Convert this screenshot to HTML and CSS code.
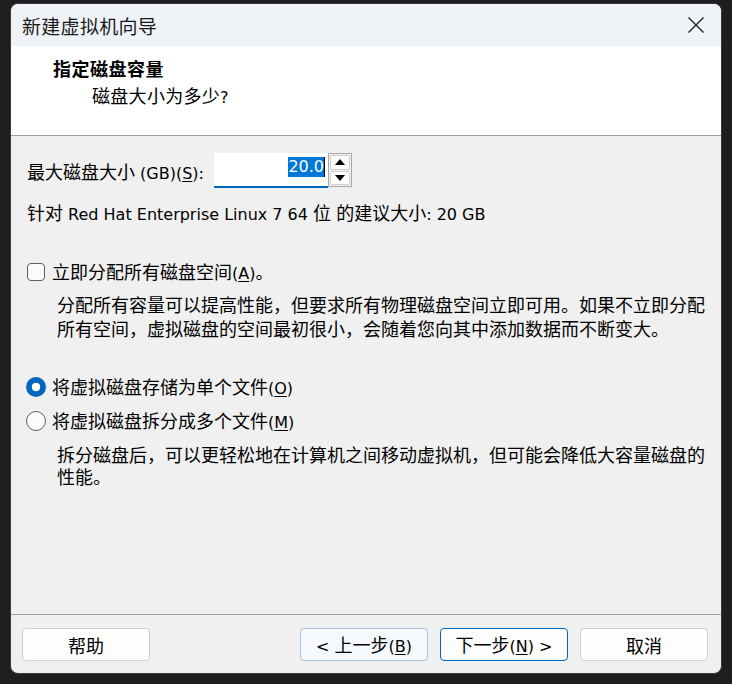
FILE: index.html
```html
<!DOCTYPE html>
<html lang="zh-CN">
<head>
<meta charset="utf-8">
<title>新建虚拟机向导</title>
<link rel="stylesheet" href="styles.css">
</head>
<body>
<div class="window">
  <div class="titlebar">
    <span class="title">新建虚拟机向导</span>
    <svg class="close" width="16" height="16" viewBox="0 0 16 16"><path d="M0.5 0.5 L15.5 15.5 M15.5 0.5 L0.5 15.5" stroke="#1a1a1a" stroke-width="1.3" fill="none"/></svg>
  </div>
  <div class="header">
    <div class="h-title">指定磁盘容量</div>
    <div class="h-sub">磁盘大小为多少<span class="lat">?</span></div>
  </div>
  <div class="content">
    <div class="size-row">
      <span class="size-label">最大磁盘大小<span class="lat"> (GB)(<u>S</u>):</span></span>
      <div class="spin">
        <div class="spin-field"><span class="sel">20.0</span><span class="caret"></span></div>
        <div class="spin-btns">
          <div class="spin-btn"><svg width="10" height="6" viewBox="0 0 10 6"><path d="M5 0 L10 6 L0 6 Z" fill="#000"/></svg></div>
          <div class="spin-btn"><svg width="10" height="6" viewBox="0 0 10 6"><path d="M0 0 L10 0 L5 6 Z" fill="#000"/></svg></div>
        </div>
      </div>
    </div>
    <div class="hint">针对<span class="lat"> Red Hat Enterprise Linux 7 64 </span>位<span class="lat"> </span>的建议大小<span class="lat">: 20 GB</span></div>
    <div class="option check-row"><span class="checkbox"></span><span>立即分配所有磁盘空间<span class="lat">(<u>A</u>)</span>。</span></div>
    <p class="desc desc1">分配所有容量可以提高性能，但要求所有物理磁盘空间立即可用。如果不立即分配<br>所有空间，虚拟磁盘的空间最初很小，会随着您向其中添加数据而不断变大。</p>
    <div class="option radio-row1"><span class="radio on"></span><span>将虚拟磁盘存储为单个文件<span class="lat">(<u>O</u>)</span></span></div>
    <div class="option radio-row2"><span class="radio"></span><span>将虚拟磁盘拆分成多个文件<span class="lat">(<u>M</u>)</span></span></div>
    <p class="desc desc2">拆分磁盘后，可以更轻松地在计算机之间移动虚拟机，但可能会降低大容量磁盘的<br>性能。</p>
  </div>
  <div class="footer">
    <button class="btn">帮助</button>
    <span class="spacer"></span>
    <button class="btn back"><span class="lat">&lt; </span>上一步<span class="lat">(<u>B</u>)</span></button>
    <button class="btn next">下一步<span class="lat">(<u>N</u>) &gt;</span></button>
    <button class="btn">取消</button>
  </div>
</div>
</body>
</html>
```

FILE: styles.css
```css
html, body {
  margin: 0;
  padding: 0;
  background: #1e1e1e;
}

body {
  font-family: "Noto Sans CJK SC", "Noto Sans", sans-serif;
  font-size: 18px;
  color: #000;
}

.lat {
  font-family: "DejaVu Sans", sans-serif;
  font-size: 16px;
  letter-spacing: 0;
}

u {
  text-decoration-thickness: 1px;
  text-underline-offset: 2px;
}

.window {
  margin: 3px 0 0 10px;
  width: 712px;
  height: 671px;
  box-sizing: border-box;
  border: 1px solid #3a3a3a;
  border-radius: 8px;
  overflow: hidden;
  display: flex;
  flex-direction: column;
  background: #f0f0f0;
}

.titlebar {
  height: 42px;
  flex: none;
  background: #eff2f7;
  display: flex;
  align-items: center;
  justify-content: space-between;
  padding: 0 17px 0 11px;
}

.title {
  font-size: 19px;
  line-height: 1;
  color: #1a1a1a;
  letter-spacing: 0.3px;
}

.close {
  display: block;
}

.header {
  flex: none;
  background: #fff;
  border-bottom: 1px solid #a0a0a0;
  padding: 10px 0 0 42px;
  box-sizing: border-box;
  height: 90px;
}

.h-title {
  font-size: 18px;
  font-weight: bold;
  line-height: 24px;
  letter-spacing: 0.5px;
}

.h-sub {
  margin: 3px 0 0 39px;
  font-size: 18px;
  line-height: 24px;
  letter-spacing: 0.3px;
}

.content {
  flex: 1;
  padding: 17px 16px 0 16px;
  white-space: nowrap;
}

.size-row {
  display: flex;
  align-items: center;
  height: 35px;
}

.size-label {
  width: 187px;
  flex: none;
  padding-top: 3px;
  line-height: 24px;
}

.spin {
  display: flex;
  align-items: flex-start;
}

.spin-field {
  width: 114px;
  height: 35px;
  box-sizing: border-box;
  background: #fff;
  border-bottom: 2px solid #0067c0;
  display: flex;
  justify-content: flex-end;
  align-items: flex-start;
  padding: 4px 3px 0 0;
}

.sel {
  background: #0078d7;
  color: #fff;
  font-family: "DejaVu Sans", sans-serif;
  font-size: 16px;
  letter-spacing: 0;
  height: 20px;
  line-height: 20px;
}

.caret {
  width: 1px;
  height: 20px;
  background: #000;
}

.spin-btns {
  width: 24px;
  height: 34px;
  box-sizing: border-box;
  border: 1px solid #a8a8a8;
  background: #f0f0f0;
  padding: 1px;
  display: flex;
  flex-direction: column;
  gap: 1px;
}

.spin-btn {
  flex: 1;
  border: 1px solid #cfcfcf;
  border-radius: 2px;
  background: #fdfdfd;
  display: flex;
  align-items: center;
  justify-content: center;
}

.spin-btn svg {
  display: block;
}

.hint {
  margin-top: 12px;
  line-height: 24px;
}

.option {
  display: flex;
  align-items: center;
  height: 24px;
  line-height: 24px;
}

.check-row {
  margin-top: 33px;
}

.checkbox {
  width: 18px;
  height: 18px;
  box-sizing: border-box;
  border: 1px solid #5f5f5f;
  border-radius: 4px;
  background: #fbfbfb;
  margin-right: 7px;
  flex: none;
}

.desc {
  margin: 0 0 0 30px;
}

.desc1 {
  margin-top: 8px;
  line-height: 24px;
}

.radio-row1 {
  margin-top: 35px;
}

.radio-row2 {
  margin-top: 10px;
}

.radio {
  width: 20px;
  height: 20px;
  box-sizing: border-box;
  border: 1px solid #5f5f5f;
  border-radius: 50%;
  margin: 0 6px 0 -1px;
  flex: none;
  background: #fbfbfb;
}

.radio.on {
  border: none;
  background: radial-gradient(circle, #ffffff 0 4px, #0067c0 4.6px);
}

.desc2 {
  margin-top: 10px;
  line-height: 22px;
}

.footer {
  height: 59px;
  box-sizing: border-box;
  flex: none;
  border-top: 1px solid #a0a0a0;
  padding: 13px 13px 0 11px;
  display: flex;
  align-items: flex-start;
  gap: 12px;
}

.spacer {
  flex: 1;
}

.btn {
  display: block;
  width: 128px;
  height: 33px;
  box-sizing: border-box;
  border: 1px solid #d0d0d0;
  border-radius: 4px;
  background: #fdfdfd;
  font-family: "Noto Sans CJK SC", sans-serif;
  font-size: 18px;
  color: #000;
  padding: 0;
  line-height: 30px;
  text-align: center;
  white-space: nowrap;
}

.btn.back {
  background: #f5f8fc;
  border-color: #a9c1dc;
}

.btn.next {
  border-color: #0067c0;
}
```
